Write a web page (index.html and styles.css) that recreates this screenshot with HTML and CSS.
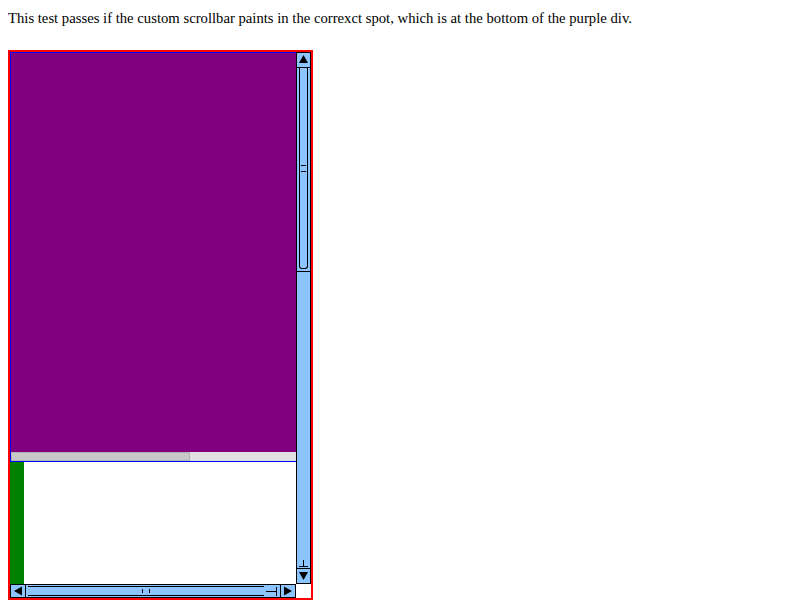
FILE: index.html
```html
<!DOCTYPE html>
<html>
<head>
<meta charset="utf-8">
<link rel="stylesheet" href="styles.css">
</head>
<body>
<div class="intro">This test passes if the custom scrollbar paints in the correxct spot, which is at the bottom of the purple div.</div>
<div class="box">
  <div class="top-row">
    <div class="main">
      <div class="purple-wrap">
        <div class="purple"></div>
        <div class="gray-bar"><div class="gray-thumb"></div></div>
      </div>
      <div class="lower">
        <div class="green"></div>
      </div>
    </div>
    <div class="vbar">
      <div class="vbtn">
        <svg width="13" height="14" viewBox="0 0 13 14"><polygon points="6.5,2 2,10 11,10" fill="#000"/></svg>
      </div>
      <div class="vthumb">
        <div class="vthumb-inner">
          <div class="vtick"></div>
          <div class="vtick"></div>
        </div>
      </div>
      <div class="vtrack"></div>
      <div class="vend"><div class="vend-stem"></div><div class="vend-bar"></div></div>
      <div class="vbtn vbtn-down">
        <svg width="13" height="14" viewBox="0 0 13 14"><polygon points="2,3 11,3 6.5,11" fill="#000"/></svg>
      </div>
    </div>
  </div>
  <div class="bottom-row">
    <div class="hbar">
      <div class="hbtn">
        <svg width="14" height="12" viewBox="0 0 14 12"><polygon points="3,6 11,1.5 11,10.5" fill="#000"/></svg>
      </div>
      <div class="hthumb">
        <div class="hthumb-inner">
          <div class="htick"></div>
          <div class="htick"></div>
        </div>
      </div>
      <div class="hend"><div class="hend-stem"></div><div class="hend-bar"></div></div>
      <div class="hbtn hbtn-right">
        <svg width="14" height="12" viewBox="0 0 14 12"><polygon points="3,1.5 11,6 3,10.5" fill="#000"/></svg>
      </div>
    </div>
    <div class="corner"></div>
  </div>
</div>
</body>
</html>
```

FILE: styles.css
```css
html, body {
  background: #fff;
}
body {
  margin: 8px 8px 0;
  font-family: "Liberation Serif", "Times New Roman", serif;
  font-size: 14.7px;
  color: #000;
}
.intro {
  height: 20px;
  line-height: 20px;
  white-space: nowrap;
}
.box {
  margin-top: 22px;
  width: 301px;
  height: 546px;
  border: 2px solid #f00;
  display: flex;
  flex-direction: column;
  overflow: hidden;
}
.top-row {
  display: flex;
  height: 532px;
}
.main {
  width: 286px;
  display: flex;
  flex-direction: column;
}
.purple-wrap {
  height: 408px;
  border: 1px solid #00f;
  border-right: none;
  display: flex;
  flex-direction: column;
}
.purple {
  height: 399px;
  background: #800080;
}
.gray-bar {
  height: 9px;
  background: #e1e1e1;
  display: flex;
  align-items: stretch;
}
.gray-thumb {
  width: 177px;
  background: #c8c8c8;
  border: 1px solid #b2b2b2;
}
.lower {
  flex: 1;
  display: flex;
}
.green {
  width: 14px;
  background: #008000;
}
.vbar {
  width: 15px;
  display: flex;
  flex-direction: column;
  background: #8cc4ff;
}
.vbtn {
  height: 14px;
  border: 1px solid #000;
  display: flex;
  align-items: center;
  justify-content: center;
}
.vbtn svg { display: block; }
.vthumb {
  height: 202px;
  border: 1px solid #000;
  border-top: none;
  display: flex;
  padding: 0 2px 2px;
}
.vthumb-inner {
  flex: 1;
  border: 1px solid #000;
  border-top: none;
  border-radius: 0 0 3px 3px;
  display: flex;
  flex-direction: column;
  align-items: center;
  justify-content: center;
  gap: 5px;
}
.vtick {
  width: 5px;
  height: 1px;
  background: #000;
}
.vtrack {
  height: 289px;
  border-left: 1px solid #000;
  border-right: 1px solid #000;
}
.vend {
  height: 8px;
  border-left: 1px solid #000;
  border-right: 1px solid #000;
  display: flex;
  flex-direction: column;
  align-items: center;
}
.vend-stem {
  width: 1px;
  height: 6px;
  background: #000;
}
.vend-bar {
  width: 9px;
  height: 1px;
  background: #000;
}
.bottom-row {
  display: flex;
  height: 14px;
}
.hbar {
  width: 286px;
  display: flex;
  background: #8cc4ff;
}
.hbtn {
  width: 14px;
  border: 1px solid #000;
  display: flex;
  align-items: center;
  justify-content: center;
}
.hbtn svg { display: block; }
.hthumb {
  width: 240px;
  border-top: 1px solid #000;
  border-bottom: 1px solid #000;
  display: flex;
  padding: 1px 2px;
}
.hthumb-inner {
  flex: 1;
  border-top: 1px solid #000;
  border-bottom: 1px solid #000;
  display: flex;
  align-items: center;
  justify-content: center;
  gap: 6px;
}
.htick {
  width: 1px;
  height: 4px;
  background: #000;
}
.hend {
  width: 14px;
  border-top: 1px solid #000;
  border-bottom: 1px solid #000;
  display: flex;
  align-items: center;
}
.hend-stem {
  width: 10px;
  height: 1px;
  background: #000;
}
.hend-bar {
  width: 1px;
  height: 9px;
  background: #000;
}
.corner {
  width: 15px;
  background: #fff;
}
```
